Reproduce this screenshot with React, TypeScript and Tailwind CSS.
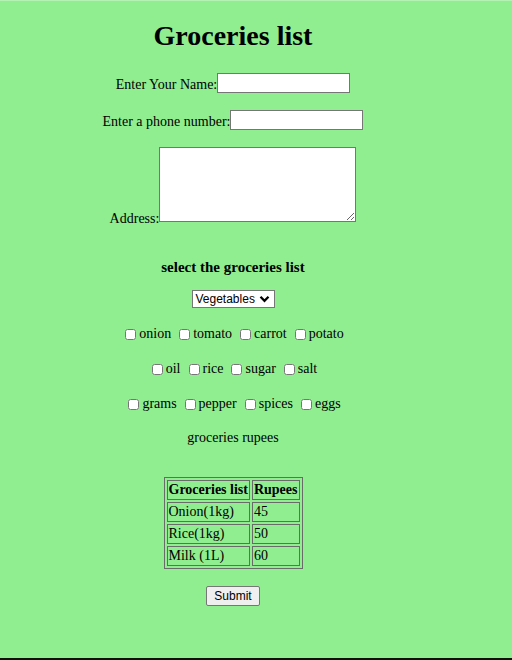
export default function App() {
  const rows: string[][] = [
    ["onion", "tomato", "carrot", "potato"],
    ["oil", "rice", "sugar", "salt"],
    ["grams", "pepper", "spices", "eggs"],
  ];
  const rowMargins = ["mt-[18px]", "mt-[19px]", "mt-[19px]"];
  const cell = "border border-[#6a6a6a] p-[1px] leading-[16px]";
  return (
    <div className="w-[512px] h-[660px] bg-[#90ee90] border-t border-t-[#b4f2b4] border-b-2 border-b-[#071407] font-['Liberation_Serif',serif] text-black text-[14px] leading-[16px]">
      <form className="w-[466px] flex flex-col items-center">
        <h1 className="mt-[19px] h-[32px] text-[28px] leading-[32px] font-bold">Groceries list</h1>

        <div className="mt-[21px] h-[20px] flex items-end">
          <span>Enter Your Name:</span>
          <input type="text" className="w-[133px] h-[20px] bg-white border border-[#767676]" />
        </div>

        <div className="mt-[17px] h-[20px] flex items-end">
          <span>Enter a phone number:</span>
          <input type="text" className="w-[133px] h-[20px] bg-white border border-[#767676]" />
        </div>

        <div className="mt-[17px] h-[75px] flex items-end">
          <span className="mb-[-5px]">Address:</span>
          <textarea className="w-[197px] h-[75px] bg-white border border-[#767676] resize" />
        </div>

        <h4 className="mt-[37px] h-[16px] text-[15px] font-bold">select the groceries list</h4>

        <div className="mt-[15px] h-[18px] w-[83px] bg-white border border-[#767676] flex items-center justify-between pl-[3px] pr-[4px] font-['Liberation_Sans',Arial,sans-serif] text-[12px] leading-[14px]">
          <span>Vegetables</span>
          <svg width="11" height="8" viewBox="0 0 11 8" fill="none">
            <path d="M1.5 1.8 L5.5 5.8 L9.5 1.8" stroke="#000" strokeWidth="2.3" />
          </svg>
        </div>

        {rows.map((row, i) => (
          <div key={i} className={`${rowMargins[i]} h-[16px] ml-[3px] flex items-center gap-[8px]`}>
            {row.map((item) => (
              <label key={item} className="flex items-center">
                <input type="checkbox" className="m-0 mr-[3px] w-[11px] h-[11px]" />
                <span>{item}</span>
              </label>
            ))}
          </div>
        ))}

        <p className="mt-[18px] h-[16px]">groceries rupees</p>

        <table className="mt-[31px] border-separate border-spacing-[2px] border border-[#6a6a6a]">
          <tbody>
            <tr>
              <th className={`${cell} font-bold text-center`}>Groceries list</th>
              <th className={`${cell} font-bold text-center`}>Rupees</th>
            </tr>
            <tr>
              <td className={cell}>Onion(1kg)</td>
              <td className={cell}>45</td>
            </tr>
            <tr>
              <td className={cell}>Rice(1kg)</td>
              <td className={cell}>50</td>
            </tr>
            <tr>
              <td className={cell}>Milk (1L)</td>
              <td className={cell}>60</td>
            </tr>
          </tbody>
        </table>

        <button
          type="button"
          className="mt-[17px] h-[20px] px-[7px] bg-[#efefef] border border-[#767676] rounded-[2px] font-['Liberation_Sans',Arial,sans-serif] text-[12px] leading-[14px]"
        >
          Submit
        </button>
      </form>
    </div>
  );
}
